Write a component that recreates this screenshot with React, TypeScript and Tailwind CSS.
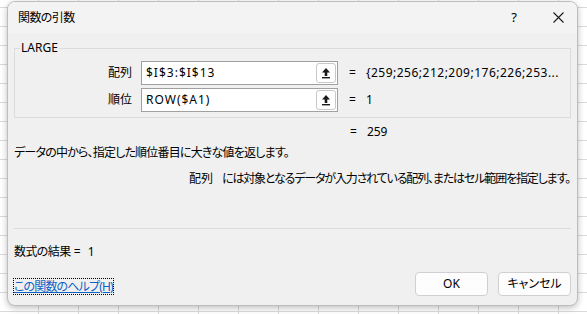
import React from 'react';

const jp = "font-['Segoe_UI','Noto_Sans','Noto_Sans_CJK_JP',sans-serif] [font-feature-settings:'palt']";

// small "collapse dialog" button inside the argument box
const RefButton = () => (
  <div className="w-[20px] h-[20px] mr-[1px] flex items-center justify-center rounded-[3px] border border-[#c8c8c8] bg-white">
    <svg width="10" height="12" viewBox="0 0 10 12">
      <path d="M5 1 L9 5.5 H6.3 V9 H3.7 V5.5 H1 Z" fill="#1b1b1b" />
      <rect x="1" y="10" width="8" height="1.4" fill="#1b1b1b" />
    </svg>
  </div>
);

const ArgRow = ({ label, value, result }: { label: string; value: string; result: string }) => (
  <div className="flex items-center h-[24px]">
    <div className="w-[117px] text-right text-[12px] text-black">{label}</div>
    <div className="ml-[9px] w-[197px] h-[24px] flex items-center justify-between border border-[#a0a0a0] bg-white">
      <span className="pl-[4px] text-[12px] text-black tracking-[1px]">{value}</span>
      <RefButton />
    </div>
    <span className="ml-[11px] text-[12px] text-black">=</span>
    <span className="ml-[10px] text-[12px] text-black whitespace-nowrap tracking-[0.5px]">{result}</span>
  </div>
);

const App = () => {
  return (
    <div
      className={`${jp} w-[587px] h-[314px] overflow-hidden pl-[7px] pt-[1px] bg-white bg-[linear-gradient(to_right,#dadada_1px,transparent_1px),linear-gradient(to_bottom,#dadada_1px,transparent_1px)] bg-[size:40px_19px] bg-[position:-2px_7px]`}
    >
      <div className="w-[571px] h-[305px] flex flex-col rounded-[8px] border border-[#bdbdbd] bg-[#f0f0f0] shadow-[0_2px_6px_rgba(0,0,0,0.25)] overflow-hidden">
        {/* Title bar */}
        <div className="h-[31px] shrink-0 flex items-center bg-[#f3f3f3] pl-[10px]">
          <span className="text-[12px] text-black tracking-[-0.6px]">関数の引数</span>
          <span className="ml-auto text-[13px] text-black">?</span>
          <svg className="ml-[36px] mr-[13px]" width="11" height="11" viewBox="0 0 11 11">
            <path d="M0.5 0.5 L10.5 10.5 M10.5 0.5 L0.5 10.5" stroke="#1b1b1b" strokeWidth="1.1" />
          </svg>
        </div>

        {/* Body */}
        <div className="flex-1 flex flex-col px-[6px]">
          <fieldset className="mt-[8px] border border-[#dcdcdc] pl-[0px] pb-[5px]">
            <legend className="ml-[5px] px-[1px] text-[12px] text-black leading-[14px]">LARGE</legend>
            <div className="mt-[6px] flex flex-col gap-[3px]">
              <ArgRow label="配列" value="$I$3:$I$13" result="{259;256;212;209;176;226;253..." />
              <ArgRow label="順位" value="ROW($A1)" result="1" />
            </div>
          </fieldset>

          <div className="mt-[6px] flex text-[12px] text-black h-[16px] items-center">
            <span className="ml-[336px]">=</span>
            <span className="ml-[10px]">259</span>
          </div>

          <p className="mt-[5px] text-[12px] text-black leading-[16px] whitespace-nowrap tracking-[-0.8px]">
            データの中から、指定した順位番目に大きな値を返します。
          </p>

          <div className="mt-[10px] flex text-[12px] text-black leading-[16px] whitespace-nowrap">
            <span className="ml-[175px] w-[33px] shrink-0">配列</span>
            <span className="tracking-[-1.15px]">には対象となるデータが入力されている配列、またはセル範囲を指定します。</span>
          </div>

          <div className="mt-[41px] h-px bg-[#dcdcdc]" />

          <div className="mt-[15px] text-[12px] text-black leading-[16px]">
            <span className="tracking-[-0.6px]">数式の結果</span> = <span className="ml-[4px]">1</span>
          </div>

          <div className="mt-auto mb-[9px] flex items-center">
            <a className="mt-[4px] text-[12px] leading-[15px] text-[#0b62c4] underline outline outline-1 outline-dotted outline-black tracking-[-0.85px]">
              この関数のヘルプ(H)
            </a>
            <button className="ml-auto w-[73px] h-[24px] rounded-[4px] border border-[#d0d0d0] bg-[#fdfdfd] text-[12px] text-black">
              OK
            </button>
            <button className="ml-[10px] w-[73px] h-[24px] rounded-[4px] border border-[#d0d0d0] bg-[#fdfdfd] text-[12px] text-black">
              キャンセル
            </button>
          </div>
        </div>
      </div>
    </div>
  );
};

export default App;
